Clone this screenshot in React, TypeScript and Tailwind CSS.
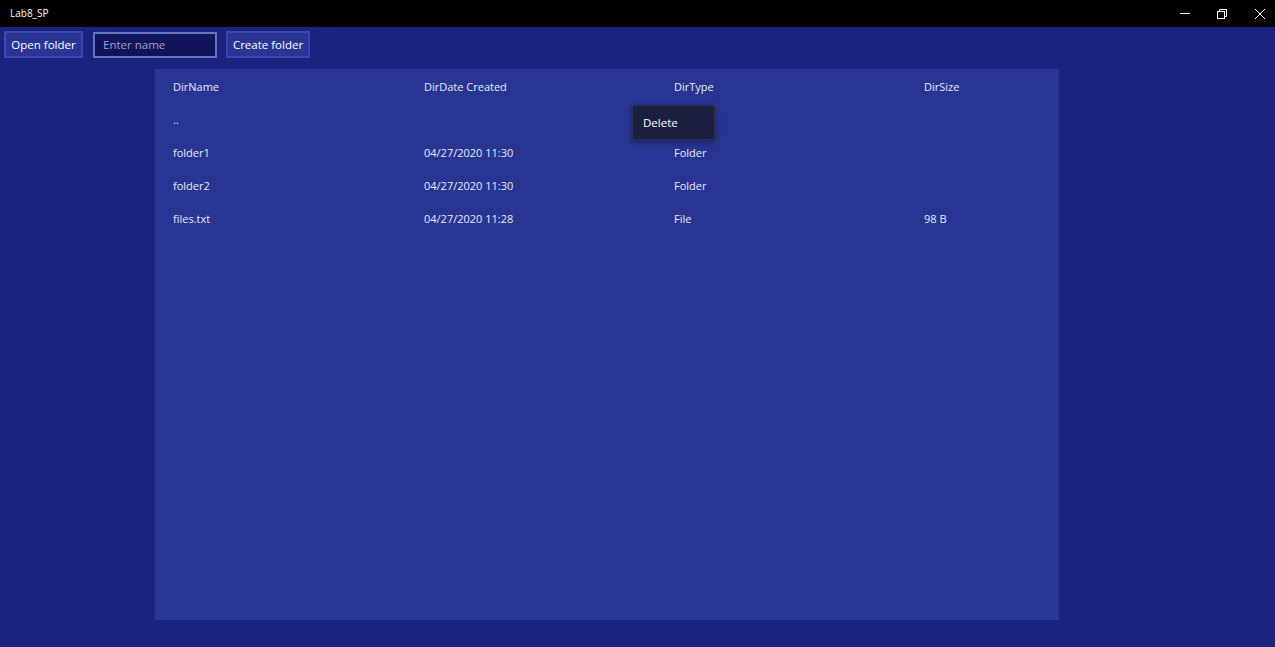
import React from 'react';

const rows = [
  { name: '..', date: '', type: '', size: '' },
  { name: 'folder1', date: '04/27/2020 11:30', type: 'Folder', size: '' },
  { name: 'folder2', date: '04/27/2020 11:30', type: 'Folder', size: '' },
  { name: 'files.txt', date: '04/27/2020 11:28', type: 'File', size: '98 B' },
];

function TitleBar() {
  return (
    <div className="h-[27px] bg-black flex items-center justify-between text-white">
      <span className="pl-[10px] text-[10px]">Lab8_SP</span>
      <div className="flex items-center h-full">
        <div className="w-[37px] h-full flex items-center justify-center">
          <div className="w-[10px] h-px bg-white" />
        </div>
        <div className="w-[38px] mr-[4px] h-full flex items-center justify-center">
          <svg width="10" height="10" viewBox="0 0 10 10" fill="none" stroke="white" strokeWidth="1">
            <rect x="0.5" y="2.5" width="7" height="7" />
            <path d="M2.5 2.5V0.5H9.5V7.5H7.5" />
          </svg>
        </div>
        <div className="w-[30px] h-full flex items-center justify-center">
          <svg width="10" height="10" viewBox="0 0 10 10" stroke="white" strokeWidth="1">
            <path d="M0 0L10 10M10 0L0 10" />
          </svg>
        </div>
      </div>
    </div>
  );
}

export default function App() {
  return (
    <div
      className="w-[1275px] h-[647px] bg-[#1a237e] flex flex-col text-[#e8eaf6]"
      style={{ fontFamily: '"Open Sans", "Noto Sans", sans-serif' }}
    >
      <TitleBar />
      <div className="flex items-center pl-[4px] pt-[4px] h-[31px]">
        <button className="h-[27px] w-[79px] bg-[#2a3596] border-2 border-[#3b48b3] text-[11.5px] text-white">
          Open folder
        </button>
        <input
          placeholder="Enter name"
          className="ml-[10px] h-[26px] w-[124px] px-[8px] bg-[#10155a] border-2 border-[#6a72c3] text-[11.5px] text-white placeholder:text-[#9aa0d4] outline-none"
        />
        <button className="ml-[9px] h-[27px] w-[84px] bg-[#2a3596] border-2 border-[#3b48b3] text-[11.5px] text-white">
          Create folder
        </button>
      </div>
      <div className="flex-1 flex pl-[155px] pt-[11px] pb-[27px]">
        <div className="w-[904px] bg-[#283593] relative pt-[1px]">
          <div className="grid grid-cols-[251px_250px_250px_1fr] pl-[18px] h-[34px] items-center text-[11px]">
            <span>DirName</span>
            <span>DirDate Created</span>
            <span>DirType</span>
            <span>DirSize</span>
          </div>
          {rows.map((r) => (
            <div
              key={r.name}
              className="grid grid-cols-[251px_250px_250px_1fr] pl-[18px] h-[33px] items-center text-[11px]"
            >
              <span>{r.name}</span>
              <span>{r.date}</span>
              <span>{r.type}</span>
              <span>{r.size}</span>
            </div>
          ))}
          <div className="absolute left-[477px] top-[36px] w-[83px] h-[35px] bg-[#1d1f3f] border border-[#2c2f52] shadow-[0_2px_6px_rgba(0,0,0,0.4)] flex items-center pl-[10px] text-[11.5px] text-white">
            Delete
          </div>
        </div>
      </div>
    </div>
  );
}
